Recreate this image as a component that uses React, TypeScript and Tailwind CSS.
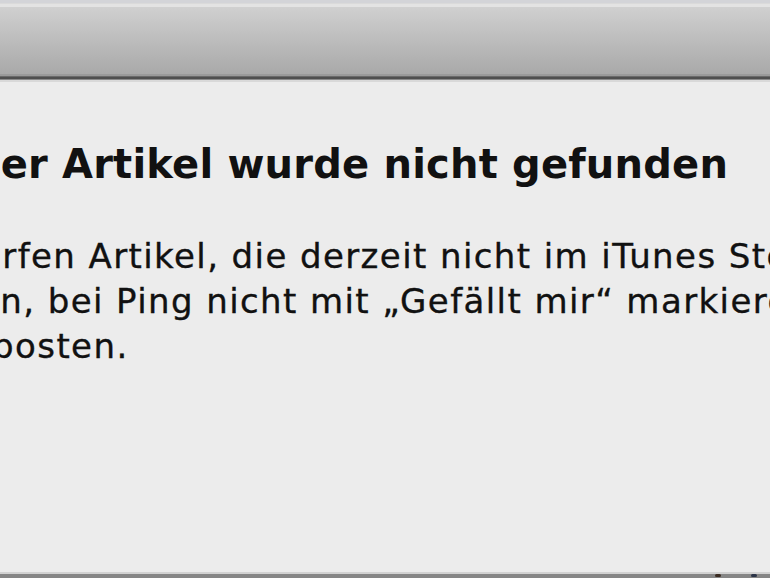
export default function App() {
  const font = { fontFamily: '"DejaVu Sans", "Liberation Sans", sans-serif' };

  return (
    <div className="w-[770px] h-[578px] overflow-hidden flex flex-col bg-[#ececec]" style={font}>
      {/* toolbar */}
      <div className="flex flex-col shrink-0">
        <div className="h-[3px] bg-[#d3d4d8]" />
        <div className="h-[1px] bg-[#dadada]" />
        <div className="h-[3px] bg-[#e3e3e3]" />
        <div className="h-[67px] bg-gradient-to-b from-[#d0d0d0] to-[#a9a9a9]" />
        <div className="h-[2px] bg-[#9a9a9a]" />
        <div className="h-[1px] bg-[#6a6a6a]" />
        <div className="h-[2px] bg-[#4f4f4f]" />
        <div className="h-[1px] bg-[#8a8a8a]" />
        <div className="h-[2px] bg-[#d9d9d9]" />
      </div>

      {/* dialog body */}
      <div className="flex-1 flex flex-col pt-[58px] text-[#111]">
        <h1 className="ml-[-98px] whitespace-nowrap text-[40px] leading-[48px] font-bold tracking-[0.2px]">
          Dieser Artikel wurde nicht gefunden
        </h1>
        <div className="mt-[46px] flex flex-col text-[34px] leading-[45px] tracking-[1.4px] whitespace-nowrap [-webkit-text-stroke:0.35px_#111]">
          <p className="ml-[-112px]">Sie dürfen Artikel, die derzeit nicht im iTunes Store verfügbar sind, nicht</p>
          <p className="ml-[-101px]">kaufen, bei Ping nicht mit „Gefällt mir“ markieren oder</p>
          <p className="ml-[-103px]">oder posten.</p>
        </div>
      </div>

      {/* bottom edge */}
      <div className="shrink-0 flex flex-col">
        <div className="h-[2px] bg-[#d2d2d2]" />
        <div className="h-[4px] bg-[#868686] flex justify-end items-start gap-[30px] pr-[13px]">
          <span className="w-[6px] h-[3px] bg-[#3b2c22] rounded-sm" />
          <span className="w-[6px] h-[3px] bg-[#2b3448] rounded-sm" />
        </div>
      </div>
    </div>
  );
}
